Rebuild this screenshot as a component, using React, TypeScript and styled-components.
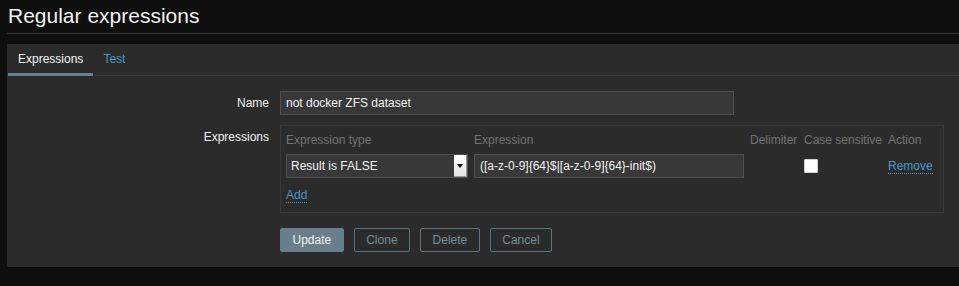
import React, { useState } from 'react';
import styled, { createGlobalStyle } from 'styled-components';

const GlobalStyle = createGlobalStyle`
  html, body {
    margin: 0;
    padding: 0;
    background: #0e0e0e;
  }
  body {
    font-family: 'Liberation Sans', Arial, sans-serif;
    font-size: 12px;
    color: #f2f2f2;
  }
`;

const Page = styled.div`
  padding-left: 7px;
  padding-bottom: 18px;
`;

const Header = styled.div`
  padding: 4px 0 5px 1px;
  border-bottom: 1px solid #383838;
  margin-bottom: 10px;
`;

const Title = styled.h1`
  margin: 0;
  font-size: 21px;
  font-weight: normal;
  line-height: 24px;
  color: #f2f2f2;
`;

const Panel = styled.div`
  background: #2b2b2b;
`;

const TabNav = styled.div`
  display: flex;
  padding-left: 1px;
  border-bottom: 1px solid #383838;
`;

const Tab = styled.div<{ $active?: boolean }>`
  height: 28px;
  line-height: 28px;
  padding: 1px 10px 0;
  margin-bottom: -1px;
  border-bottom: 3px solid ${p => (p.$active ? '#6a818d' : 'transparent')};
  color: ${p => (p.$active ? '#f2f2f2' : '#4796c4')};
  cursor: pointer;
`;

const Form = styled.div`
  display: grid;
  grid-template-columns: 262px 1fr;
  column-gap: 11px;
  row-gap: 10px;
  padding: 15px 0 15px;
`;

const Label = styled.div`
  text-align: right;
  padding-top: 5px;
  line-height: 14px;
  color: #f2f2f2;
`;

const TextInput = styled.input<{ $width: number }>`
  box-sizing: border-box;
  width: ${p => p.$width}px;
  height: 24px;
  padding: 0 5px;
  background: #383838;
  border: 1px solid #4f4f4f;
  color: #f2f2f2;
  font: inherit;
  outline: none;
`;

const ExprTable = styled.div`
  width: 664px;
  box-sizing: border-box;
  border: 1px solid #383838;
  padding: 5px 5px 10px;
  display: grid;
  grid-template-columns: 182px 270px 48px 78px 1fr;
  column-gap: 6px;
  row-gap: 4px;
  align-items: center;
`;

const HeadCell = styled.div`
  height: 19px;
  line-height: 19px;
  color: #737373;
  white-space: nowrap;
`;

const Select = styled.div`
  box-sizing: border-box;
  height: 24px;
  display: flex;
  align-items: stretch;
  background: #383838;
  border: 1px solid #4f4f4f;
`;

const SelectValue = styled.span`
  flex: 1;
  padding-left: 4px;
  line-height: 22px;
  color: #f2f2f2;
`;

const SelectArrow = styled.span`
  width: 12px;
  background: linear-gradient(#fdfdfd, #e4e4e4);
  border-right: 1px solid #9a9a9a;
  border-bottom: 1px solid #9a9a9a;
  display: flex;
  align-items: center;
  justify-content: center;

  &::after {
    content: '';
    border-left: 3px solid transparent;
    border-right: 3px solid transparent;
    border-top: 4px solid #111;
  }
`;

const Checkbox = styled.span`
  display: block;
  width: 14px;
  height: 14px;
  background: #ffffff;
  border-radius: 2px;
  box-shadow: inset 0 0 0 1px #d0d6db;
`;

const Link = styled.a`
  justify-self: start;
  color: #4796c4;
  line-height: 14px;
  text-decoration: none;
  border-bottom: 1px dotted #4796c4;
  cursor: pointer;
`;

const AddRow = styled.div`
  grid-column: 1 / -1;
  padding-top: 6px;
  line-height: 14px;
`;

const Buttons = styled.div`
  grid-column: 2;
  display: flex;
  gap: 10px;
  padding-top: 5px;
`;

const Button = styled.button<{ $primary?: boolean }>`
  height: 24px;
  padding: 0 11.5px;
  font: inherit;
  border: 1px solid ${p => (p.$primary ? '#687f8b' : '#5c7482')};
  background: ${p => (p.$primary ? '#687f8b' : 'transparent')};
  color: ${p => (p.$primary ? '#f2f2f2' : '#768d99')};
  border-radius: 2px;
  cursor: pointer;
`;

export default function App() {
  const [tab, setTab] = useState('expr');
  const [name, setName] = useState('not docker ZFS dataset');
  const [expr, setExpr] = useState('([a-z-0-9]{64}$|[a-z-0-9]{64}-init$)');

  return (
    <>
      <GlobalStyle />
      <Page>
        <Header>
          <Title>Regular expressions</Title>
        </Header>
        <Panel>
          <TabNav>
            <Tab $active={tab === 'expr'} onClick={() => setTab('expr')}>Expressions</Tab>
            <Tab $active={tab === 'test'} onClick={() => setTab('test')}>Test</Tab>
          </TabNav>
          <Form>
            <Label>Name</Label>
            <div>
              <TextInput $width={454} value={name} onChange={e => setName(e.target.value)} />
            </div>

            <Label>Expressions</Label>
            <div>
              <ExprTable>
                <HeadCell>Expression type</HeadCell>
                <HeadCell>Expression</HeadCell>
                <HeadCell>Delimiter</HeadCell>
                <HeadCell>Case sensitive</HeadCell>
                <HeadCell>Action</HeadCell>

                <Select>
                  <SelectValue>Result is FALSE</SelectValue>
                  <SelectArrow />
                </Select>
                <TextInput $width={270} value={expr} onChange={e => setExpr(e.target.value)} />
                <div />
                <div><Checkbox /></div>
                <Link>Remove</Link>

                <AddRow>
                  <Link>Add</Link>
                </AddRow>
              </ExprTable>
            </div>

            <Buttons>
              <Button $primary>Update</Button>
              <Button>Clone</Button>
              <Button>Delete</Button>
              <Button>Cancel</Button>
            </Buttons>
          </Form>
        </Panel>
      </Page>
    </>
  );
}
